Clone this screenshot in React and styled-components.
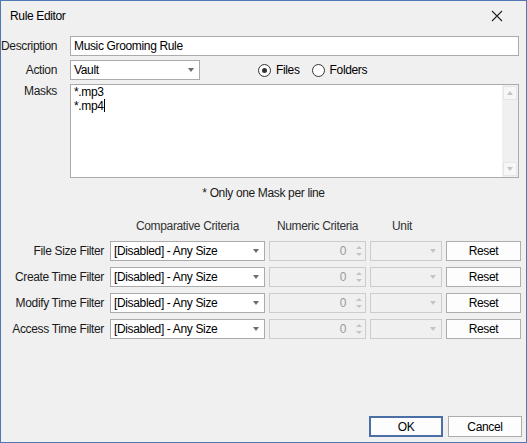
import React from 'react';
import styled, { createGlobalStyle } from 'styled-components';

const GlobalStyle = createGlobalStyle`
    html, body {
        margin: 0;
        padding: 0;
        background: #ffffff;
    }
    body {
        font-family: "Liberation Sans", Arial, sans-serif;
        font-size: 12px;
        letter-spacing: -0.35px;
        color: #1a1a1a;
    }
`;

const Window = styled.div`
    width: 527px;
    height: 443px;
    box-sizing: border-box;
    border: 1px solid #5078b3;
    background: #f0f0f0;
    display: flex;
    flex-direction: column;
`;

const TitleBar = styled.div`
    height: 30px;
    display: flex;
    align-items: center;
    justify-content: space-between;
    padding-left: 9px;
`;

const Title = styled.span`
    color: #000;
`;

const CloseButton = styled.div`
    width: 30px;
    height: 30px;
    margin-right: 14px;
    display: flex;
    align-items: center;
    justify-content: center;
`;

const Form = styled.div`
    display: grid;
    grid-template-columns: 56px 1fr;
    column-gap: 13px;
    row-gap: 4px;
    padding: 5px 7px 0 0;
`;

const Label = styled.div`
    text-align: right;
    line-height: ${p => p.top ? '14px' : '20px'};
    white-space: nowrap;
`;

const TextInput = styled.div`
    height: 20px;
    box-sizing: border-box;
    border: 1px solid #ababab;
    background: #fff;
    padding: 0 3px;
    line-height: 18px;
    color: #000;
`;

const ActionRow = styled.div`
    display: flex;
    align-items: center;
`;

const Select = styled.div`
    width: ${p => p.width}px;
    height: 20px;
    box-sizing: border-box;
    border: 1px solid ${p => p.disabled ? '#cccccc' : '#ababab'};
    background: ${p => p.disabled ? '#f0f0f0' : '#fff'};
    display: flex;
    align-items: center;
    justify-content: space-between;
    padding: 0 5px 0 3px;
    color: #000;
`;

const Caret = styled.span`
    width: 0;
    height: 0;
    border-left: 3.5px solid transparent;
    border-right: 3.5px solid transparent;
    border-top: 4px solid ${p => p.disabled ? '#c4c4c4' : '#6d6d6d'};
    margin-left: auto;
`;

const RadioGroup = styled.div`
    display: flex;
    align-items: center;
    margin-left: 58px;
    gap: 12px;
`;

const RadioOption = styled.label`
    display: flex;
    align-items: center;
    gap: 5px;
    color: #000;
`;

const RadioCircle = styled.span`
    width: 13px;
    height: 13px;
    box-sizing: border-box;
    border: 1px solid #333;
    border-radius: 50%;
    background: #fff;
    display: flex;
    align-items: center;
    justify-content: center;
    &::after {
        content: '';
        width: 5px;
        height: 5px;
        border-radius: 50%;
        background: ${p => p.checked ? '#333' : 'transparent'};
    }
`;

const MaskBox = styled.div`
    height: 94px;
    box-sizing: border-box;
    border: 1px solid #ababab;
    background: #fff;
    display: flex;
`;

const MaskText = styled.div`
    flex: 1;
    padding: 1px 3px;
    line-height: 13px;
    color: #000;
`;

const Cursor = styled.span`
    display: inline-block;
    width: 1px;
    height: 13px;
    background: #000;
    vertical-align: -2px;
`;

const ScrollBar = styled.div`
    width: 16px;
    background: #f0f0f0;
    display: flex;
    flex-direction: column;
    justify-content: space-between;
    align-items: center;
    padding: 1px 0;
    box-sizing: border-box;
`;

const ScrollArrow = styled.div`
    width: 14px;
    height: 14px;
    box-sizing: border-box;
    border: 1px solid #e6e6e6;
    background: #f7f7f7;
    display: flex;
    align-items: center;
    justify-content: center;
    &::after {
        content: '';
        width: 0;
        height: 0;
        border-left: 3.5px solid transparent;
        border-right: 3.5px solid transparent;
        ${p => p.up ? 'border-bottom' : 'border-top'}: 4px solid #c4c4c4;
    }
`;

const Hint = styled.div`
    text-align: center;
    margin-top: 8px;
    line-height: 14px;
    color: #1a1a1a;
`;

const FilterTable = styled.div`
    display: flex;
    flex-direction: column;
    gap: 6px;
    margin-top: 19px;
`;

const FilterRow = styled.div`
    display: grid;
    grid-template-columns: 105px 155px 97px 72px 75px;
    column-gap: 4px;
    height: ${p => p.header ? 16 : 20}px;
`;

const Header = styled.div`
    text-align: center;
    line-height: 14px;
    margin-left: ${p => p.shift || 0}px;
    color: #333;
`;

const FilterLabel = styled.div`
    text-align: right;
    line-height: 20px;
    padding-right: 2px;
    white-space: nowrap;
    color: #1a1a1a;
`;

const Spin = styled.div`
    height: 20px;
    box-sizing: border-box;
    border: 1px solid #cccccc;
    background: #f0f0f0;
    display: flex;
    align-items: center;
    justify-content: flex-end;
    color: #9a9a9a;
    padding-right: 2px;
`;

const SpinArrows = styled.div`
    display: flex;
    flex-direction: column;
    gap: 4px;
    margin-left: 9px;
    width: 8px;
    align-items: center;
    &::before, &::after {
        content: '';
        width: 0;
        height: 0;
        border-left: 3px solid transparent;
        border-right: 3px solid transparent;
    }
    &::before { border-bottom: 3px solid #c4c4c4; }
    &::after { border-top: 3px solid #c4c4c4; }
`;

const Button = styled.div`
    width: ${p => p.width || 75}px;
    height: ${p => p.height || 20}px;
    box-sizing: border-box;
    border: ${p => p.primary ? '2px solid #4a6ea6' : '1px solid #adadad'};
    background: #fdfdfd;
    display: flex;
    align-items: center;
    justify-content: center;
    color: #000;
`;

const Footer = styled.div`
    margin-top: auto;
    display: flex;
    justify-content: flex-end;
    gap: 5px;
    padding: 0 4px 5px 0;
`;

const filters = ['File Size Filter', 'Create Time Filter', 'Modify Time Filter', 'Access Time Filter'];

const CloseIcon = () => (
    <svg width="12" height="12" viewBox="0 0 12 12">
        <path d="M1 1 L11 11 M11 1 L1 11" stroke="#222" strokeWidth="1.1" fill="none" />
    </svg>
);

const App = () => {
    return (
        <Window>
            <GlobalStyle />
            <TitleBar>
                <Title>Rule Editor</Title>
                <CloseButton><CloseIcon /></CloseButton>
            </TitleBar>
            <Form>
                <Label>Description</Label>
                <TextInput>Music Grooming Rule</TextInput>

                <Label>Action</Label>
                <ActionRow>
                    <Select width={130}>Vault<Caret /></Select>
                    <RadioGroup>
                        <RadioOption><RadioCircle checked />Files</RadioOption>
                        <RadioOption><RadioCircle />Folders</RadioOption>
                    </RadioGroup>
                </ActionRow>

                <Label top>Masks</Label>
                <MaskBox>
                    <MaskText>
                        *.mp3<br />
                        *.mp4<Cursor />
                    </MaskText>
                    <ScrollBar>
                        <ScrollArrow up />
                        <ScrollArrow />
                    </ScrollBar>
                </MaskBox>
            </Form>
            <Hint>* Only one Mask per line</Hint>
            <FilterTable>
                <FilterRow header>
                    <span />
                    <Header>Comparative Criteria</Header>
                    <Header>Numeric Criteria</Header>
                    <Header shift={-8}>Unit</Header>
                </FilterRow>
                {filters.map((name) => (
                    <FilterRow key={name}>
                        <FilterLabel>{name}</FilterLabel>
                        <Select width={155}>[Disabled] - Any Size<Caret /></Select>
                        <Spin>0<SpinArrows /></Spin>
                        <Select width={72} disabled><Caret disabled /></Select>
                        <Button>Reset</Button>
                    </FilterRow>
                ))}
            </FilterTable>
            <Footer>
                <Button primary width={74} height={21}>OK</Button>
                <Button width={74} height={21}>Cancel</Button>
            </Footer>
        </Window>
    );
};

export default App;
